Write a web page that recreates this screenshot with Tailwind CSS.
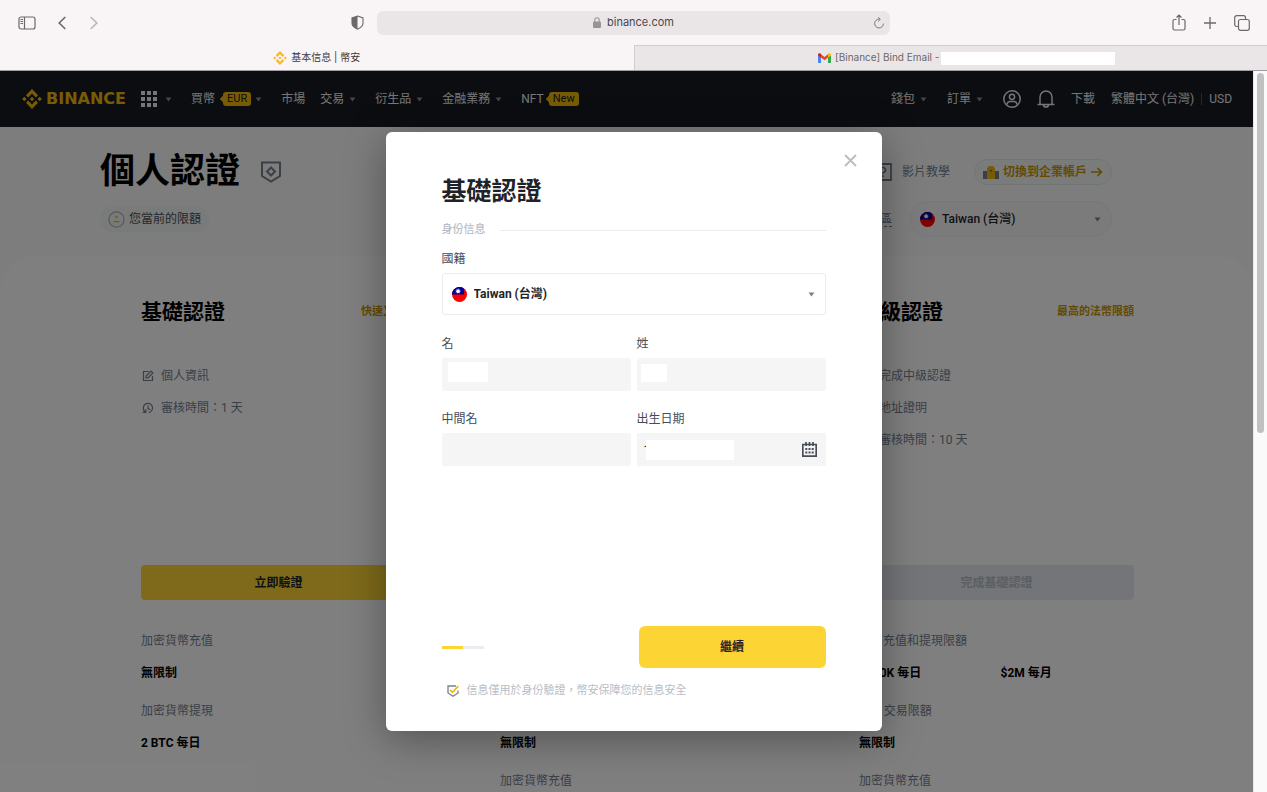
<!DOCTYPE html>
<html lang="zh-Hant">
  <head>
    <meta charset="UTF-8" />
    <meta name="viewport" content="width=device-width, initial-scale=1.0" />
    <script src="https://cdn.jsdelivr.net/npm/@tailwindcss/browser@4"></script>
    <title>基本信息 | 幣安</title>
  </head>

<body class="h-screen flex flex-col overflow-hidden bg-white text-xs font-[Roboto,'Noto_Sans_CJK_TC',sans-serif]">

  <!-- shared shapes -->
  <svg class="hidden" aria-hidden="true">
    <symbol id="bnb" viewBox="0 0 24 24">
      <path fill="currentColor" d="M7.4 10.1 12 5.5l4.6 4.6 2.7-2.7L12 .1 4.7 7.4zM.1 12l2.7-2.7L5.500 12l-2.700 2.700zM7.4 13.900 12 18.500l4.600-4.600 2.700 2.700L12 23.900l-7.300-7.300zM18.500 12l2.700-2.700L23.900 12l-2.700 2.700zM14.700 12 12 14.700 9.300 12 12 9.300z"/>
    </symbol>
    <symbol id="caret" viewBox="0 0 8 6"><path fill="currentColor" d="M.5.500h7L4 5.500z"/></symbol>
    <symbol id="flag" viewBox="0 0 16 16">
      <circle cx="8" cy="8" r="8" fill="#fe0000"/>
      <path fill="#000095" d="M0 8A8 8 0 0 1 13 1.800V8z"/>
      <circle cx="6.500" cy="4.500" r="2" fill="#fff"/>
      <circle cx="6.500" cy="4.500" r="2.600" fill="none" stroke="#8e8ee0" stroke-width=".8" stroke-dasharray="1 1"/>
    </symbol>
    <symbol id="edit" viewBox="0 0 16 16">
      <path fill="none" stroke="currentColor" stroke-width="1.600" d="M9 2H2v12h12V8M5.500 10.500V8L12 1.500 14.500 4 8 10.500z"/>
    </symbol>
    <symbol id="clock" viewBox="0 0 16 16">
      <path fill="none" stroke="currentColor" stroke-width="1.600" d="M4.500 13.200A6.200 6.200 0 1 1 9 14.100M1 13.800h4.200V9.600M8 4.500v4l2.800 1.800"/>
    </symbol>
  </svg>

  <!-- browser toolbar -->
  <div class="h-[45px] shrink-0 grid grid-cols-[1fr_513px_1fr] items-center bg-[#f9f5f7] text-[#6b686a]">
    <div class="flex items-center pl-[18px] pr-[13px]">
      <button aria-label="Sidebar">
        <svg class="w-[18px] h-[14px]" viewBox="0 0 18 14" fill="none" stroke="currentColor" stroke-width="1.2"><rect x="1" y="1" width="16" height="12" rx="2"/><path d="M6.500 1v12M2.500 3.500h2.500M2.500 5.500h2.500M2.500 7.500h2.500"/></svg>
      </button>
      <button class="ml-[22px]" aria-label="Back">
        <svg class="w-2 h-[14px]" viewBox="0 0 8 14" fill="none" stroke="currentColor" stroke-width="1.600"><path d="M7.300 1 1.200 7l6.100 6"/></svg>
      </button>
      <button class="ml-6 text-[#b9b6b8]" aria-label="Forward">
        <svg class="w-2 h-[14px]" viewBox="0 0 8 14" fill="none" stroke="currentColor" stroke-width="1.600"><path d="M.7 1l6.100 6-6.100 6"/></svg>
      </button>
      <button class="ml-auto" aria-label="Privacy report">
        <svg class="w-[13px] h-[15px]" viewBox="0 0 13 15"><path d="M6.500 1 12 3v5.500c0 2.500-2.500 4.300-5.500 5.700C3.500 12.800 1 11 1 8.500V3z" fill="none" stroke="currentColor" stroke-width="1.100"/><path d="M6.500 1v13.200C3.500 12.800 1 11 1 8.500V3z" fill="currentColor"/></svg>
      </button>
    </div>
    <div class="h-6 rounded-md bg-[#eae6e8] flex items-center justify-center relative font-[Inter,sans-serif] text-[11px] text-[#4b484a]">
      <svg class="w-2 h-[11px] mr-1.5" viewBox="0 0 8 11"><rect x="0" y="4.500" width="8" height="6.500" rx="1" fill="#979496"/><path d="M1.800 5V3a2.200 2.200 0 0 1 4.400 0v2" fill="none" stroke="#979496" stroke-width="1.100"/></svg>
      binance.com
      <button class="absolute right-[5px]" aria-label="Reload">
        <svg class="w-3 h-3" viewBox="0 0 12 12" fill="none" stroke="#7b787a" stroke-width="1"><path d="M6.500 2.200A4.400 4.400 0 1 0 10.400 6.600M5 .3l2.300 2L5.200 4.400"/></svg>
      </button>
    </div>
    <div class="flex items-center justify-end gap-[18px] pr-[17px]">
      <button aria-label="Share">
        <svg class="w-[14px] h-[17px]" viewBox="0 0 14 17" fill="none" stroke="currentColor" stroke-width="1.200"><path d="M4.500 5.500H2.500A1.500 1.500 0 0 0 1 7v7.500A1.500 1.500 0 0 0 2.500 16h9a1.500 1.500 0 0 0 1.500-1.500V7a1.500 1.500 0 0 0-1.500-1.500h-2M7 11V1M4.500 3.500 7 1l2.500 2.500"/></svg>
      </button>
      <button aria-label="New tab">
        <svg class="w-3 h-3" viewBox="0 0 12 12" fill="none" stroke="currentColor" stroke-width="1.300"><path d="M6 0v12M0 6h12"/></svg>
      </button>
      <button aria-label="Tab overview">
        <svg class="w-4 h-4" viewBox="0 0 16 16" fill="none" stroke="currentColor" stroke-width="1.200"><rect x="4.500" y="4.500" width="10.800" height="10.800" rx="2"/><path d="M4.500 11.500H2.700a2 2 0 0 1-2-2V2.700a2 2 0 0 1 2-2h6.800a2 2 0 0 1 2 2v1.800"/></svg>
      </button>
    </div>
  </div>

  <!-- browser tabs -->
  <div class="h-[26px] shrink-0 grid grid-cols-2 text-[10px] font-[Inter,'Noto_Sans_CJK_TC',sans-serif] border-b border-[#a09ea0]">
    <div class="flex items-center justify-center gap-1 bg-[#f9f5f7] text-[#3c393b]">
      <svg class="w-[14px] h-[14px] text-[#f3ba2f]"><use href="#bnb"/></svg>
      基本信息 | 幣安
    </div>
    <div class="flex items-center justify-center gap-1 pl-8 bg-[#eae6e8] text-[#6b686a] border-l border-t border-[#d0cccf]">
      <svg class="w-[13px] h-[10px]" viewBox="0 0 13 10"><path fill="#4285f4" d="M0 2v7.200c0 .5.300.8.800.8H3V4z"/><path fill="#34a853" d="M10 4v6h2.200c.5 0 .8-.3.800-.8V2z"/><path fill="#ea4335" d="M3 1.200 6.500 4 10 1.200V4.600L6.500 7.300 3 4.600z"/><path fill="#c5221f" d="M0 2C0 .2 1.700-.3 3 .8v3.800L0 2.400z"/><path fill="#fbbc04" d="M13 2c0-1.800-1.700-2.300-3-1.200v3.800l3-2.200z"/></svg>
      <span>[Binance] Bind Email -</span>
      <span class="w-[174px] h-[13px] bg-white -ml-0.5"></span>
    </div>
  </div>

  <div class="relative flex-1 min-h-0 flex">
    <div class="relative flex-1 min-w-0 overflow-hidden bg-[#fafafa]">

      <!-- navbar -->
      <nav class="h-14 bg-[#181a20] text-[#eaecef] pl-[22px] pr-[21px] flex items-center justify-between whitespace-nowrap">
        <div class="flex items-center gap-[15px]">
          <a href="#" class="flex items-center gap-1 text-[#f0b90b] font-['DejaVu_Sans',sans-serif] font-bold text-base">
            <svg class="w-5 h-5"><use href="#bnb"/></svg>BINANCE
          </a>
          <a href="#" aria-label="Products" class="flex items-center gap-2 mr-1">
            <svg class="w-4 h-4" viewBox="0 0 16 16" fill="currentColor"><path d="M0 0h4v4H0zM6 0h4v4H6zM12 0h4v4h-4zM0 6h4v4H0zM6 6h4v4H6zM12 6h4v4h-4zM0 12h4v4H0zM6 12h4v4H6zM12 12h4v4h-4z"/></svg>
            <svg class="w-[7px] h-[5px] text-[#848e9c]"><use href="#caret"/></svg>
          </a>
          <a href="#" class="flex items-center gap-1 mr-1">買幣
            <span class="relative ml-1 bg-[#f0b90b] text-[#181a20] rounded-[3px] px-1 h-[14px] leading-[14px] text-[11px] before:absolute before:-left-0.5 before:top-1 before:w-1.5 before:h-1.5 before:rotate-45 before:bg-[#f0b90b]"><span class="relative">EUR</span></span>
            <svg class="w-[7px] h-[5px] text-[#848e9c]"><use href="#caret"/></svg>
          </a>
          <a href="#">市場</a>
          <a href="#" class="flex items-center gap-[5px] mr-1">交易 <svg class="w-[7px] h-[5px] text-[#848e9c]"><use href="#caret"/></svg></a>
          <a href="#" class="flex items-center gap-[5px] mr-1">衍生品 <svg class="w-[7px] h-[5px] text-[#848e9c]"><use href="#caret"/></svg></a>
          <a href="#" class="flex items-center gap-[5px] mr-1">金融業務 <svg class="w-[7px] h-[5px] text-[#848e9c]"><use href="#caret"/></svg></a>
          <a href="#" class="flex items-center gap-[5px]">NFT
            <span class="relative bg-[#f0b90b] text-[#181a20] rounded-[3px] px-1 h-[14px] leading-[14px] text-[11px] before:absolute before:-left-0.5 before:top-1 before:w-1.5 before:h-1.5 before:rotate-45 before:bg-[#f0b90b]"><span class="relative">New</span></span>
          </a>
        </div>
        <div class="flex items-center gap-4">
          <a href="#" class="flex items-center gap-[5px] mr-1">錢包 <svg class="w-[7px] h-[5px] text-[#848e9c]"><use href="#caret"/></svg></a>
          <a href="#" class="flex items-center gap-[5px] mr-1">訂單 <svg class="w-[7px] h-[5px] text-[#848e9c]"><use href="#caret"/></svg></a>
          <a href="#" aria-label="Account">
            <svg class="w-[18px] h-[18px]" viewBox="0 0 18 18" fill="none" stroke="currentColor" stroke-width="1.500"><circle cx="9" cy="9" r="8.200"/><circle cx="9" cy="6.800" r="2.600"/><path d="M4 14.500c.3-2 1.500-3 3-3h4c1.500 0 2.700 1 3 3"/></svg>
          </a>
          <a href="#" aria-label="Notifications">
            <svg class="w-[18px] h-[18px]" viewBox="0 0 18 18" fill="none" stroke="currentColor" stroke-width="1.500"><path d="M.5 14.500h17M3 14.500V7a6 6 0 0 1 12 0v7.500M6.500 15c.5 2.800 4.500 2.800 5 0"/></svg>
          </a>
          <a href="#">下載</a>
          <div class="flex items-center gap-[7px]">
            <a href="#">繁體中文 (台灣)</a>
            <span class="w-px h-3 bg-[#474d57]"></span>
            <a href="#">USD</a>
          </div>
        </div>
      </nav>

      <!-- page heading -->
      <header class="pl-[100px] pr-[141px] pt-6 pb-[19px] flex flex-col gap-2">
        <div class="h-[42px] flex items-center justify-between">
          <h1 class="flex items-center gap-[21px] text-[35px] leading-[42px] font-bold">個人認證
            <svg class="w-5 h-[22px] text-[#76808f]" viewBox="0 0 20 22" fill="none" stroke="currentColor" stroke-width="2"><path d="M1 1.500h18V15l-9 5.500L1 15z"/><path d="M10 6.500 14 10.500 10 14.500 6 10.500z"/></svg>
          </h1>
          <div class="flex items-center">
            <a href="#" class="flex items-center gap-2.5 text-[#76808f]">
              <svg class="w-[18px] h-[18px]" viewBox="0 0 18 18" fill="none" stroke="currentColor" stroke-width="1.800"><path d="M1 1h16v16H1z"/><path d="M6.500 7a2.500 2.500 0 1 1 3.800 2.100c-.9.500-1.300.9-1.300 1.700M9 12.200v1.800"/></svg>
              影片教學
            </a>
            <a href="#" class="ml-6 h-[26px] px-2 rounded-full border border-[#e6eaea] bg-[#f5f9f8] flex items-center gap-1 font-bold text-[#c99400]">
              <svg class="w-4 h-[13px]" viewBox="0 0 16 13"><path fill="#76808f" d="M0 5h4v8H0zM12 5h4v8h-4z"/><path fill="#f0b90b" d="M4 2l2-2h4l2 2v11H4z"/><path fill="#76808f" d="M8 3.200 9.500 4.700 8 6.200 6.500 4.700z"/></svg>
              切換到企業帳戶
              <svg class="w-3 h-2.5" viewBox="0 0 12 10" fill="none" stroke="currentColor" stroke-width="1.700"><path d="M0 5h10.500M6.500 1l4 4-4 4"/></svg>
            </a>
          </div>
        </div>
        <div class="flex items-center justify-between">
          <div class="h-[26px] px-2 rounded-full bg-[#f2f6f4] flex items-center gap-1 text-[#474d57]">
            <svg class="w-[17px] h-[17px]" viewBox="0 0 17 17"><circle cx="8.500" cy="8.500" r="7.600" fill="none" stroke="#aeb4bc" stroke-width="1.300"/><path fill="#f0b90b" d="M8.500 4.500 10 6 8.500 7.500 7 6zM5.500 10h6v1.200h-6z"/></svg>
            您當前的限額
          </div>
          <div class="flex items-center gap-[18px]">
            <label for="region" class="text-[#76808f] border-b border-dashed border-[#76808f] leading-[14px]">居住國家/地區</label>
            <div class="relative flex items-center">
              <svg class="absolute left-[10px] w-[15px] h-[15px]"><use href="#flag"/></svg>
              <select id="region" class="w-[202px] h-9 pl-[31px] appearance-none rounded-full border border-[#efefef] bg-[#f6f6f6] text-[#1e2329] text-xs font-medium"><option>Taiwan (台灣)</option></select>
              <svg class="absolute right-[11px] w-[7px] h-[5px] text-[#76808f]"><use href="#caret"/></svg>
            </div>
          </div>
        </div>
      </header>

      <!-- verification levels -->
      <main class="bg-white rounded-t-[35px] pl-[141px] pr-[119px] pt-10 pb-20 grid grid-cols-3 gap-[84px] whitespace-nowrap">
        <section>
          <div class="h-8 flex items-center justify-between">
            <h2 class="text-[21px] font-bold">基礎認證</h2>
            <span class="text-[11px] font-bold text-[#c99400]">快速又簡單</span>
          </div>
          <ul class="mt-8 min-h-[205px] leading-8 text-[#76808f]">
            <li class="flex items-center gap-1.5"><svg class="w-[14px] h-3"><use href="#edit"/></svg>個人資訊</li>
            <li class="flex items-center gap-1.5"><svg class="w-[14px] h-3"><use href="#clock"/></svg>審核時間：1 天</li>
          </ul>
          <button class="w-full h-[35px] rounded bg-[#fcd535] font-bold text-[#1e2329]">立即驗證</button>
          <dl class="mt-[29px] flex flex-col gap-[14px] leading-6">
            <div><dt class="text-[#76808f]">加密貨幣充值</dt><dd class="mt-2 font-bold">無限制</dd></div>
            <div><dt class="text-[#76808f]">加密貨幣提現</dt><dd class="mt-2 font-bold">2 BTC 每日</dd></div>
          </dl>
        </section>

        <section>
          <div class="h-8 flex items-center justify-between">
            <h2 class="text-[21px] font-bold">中級認證</h2>
          </div>
          <ul class="mt-8 min-h-[205px] leading-8 text-[#76808f]">
            <li class="flex items-center gap-1.5"><svg class="w-[14px] h-3"><use href="#edit"/></svg>完成基礎認證</li>
            <li class="flex items-center gap-1.5"><svg class="w-[14px] h-3"><use href="#clock"/></svg>審核時間：10 天</li>
          </ul>
          <button class="w-full h-[35px] rounded bg-[#e6eaf0] font-bold text-[#b7bdc6]" disabled>完成基礎認證</button>
          <dl class="mt-[29px] flex flex-col gap-[14px] leading-6">
            <div><dt class="text-[#76808f]">法幣充值和提現限額</dt><dd class="mt-2 font-bold">$50K 每日</dd></div>
            <div><dt class="text-[#76808f]">P2P 交易限額</dt><dd class="mt-2 font-bold">無限制</dd></div>
            <div><dt class="text-[#76808f]">加密貨幣充值</dt></div>
          </dl>
        </section>

        <section>
          <div class="h-8 flex items-center justify-between">
            <h2 class="text-[21px] font-bold">高級認證</h2>
            <span class="text-[11px] font-bold text-[#c99400]">最高的法幣限額</span>
          </div>
          <ul class="mt-8 min-h-[205px] leading-8 text-[#76808f]">
            <li class="flex items-center gap-1.5"><svg class="w-[14px] h-3"><use href="#edit"/></svg>完成中級認證</li>
            <li class="flex items-center gap-1.5"><svg class="w-[14px] h-3"><use href="#edit"/></svg>地址證明</li>
            <li class="flex items-center gap-1.5"><svg class="w-[14px] h-3"><use href="#clock"/></svg>審核時間：10 天</li>
          </ul>
          <button class="w-full h-[35px] rounded bg-[#e6eaf0] font-bold text-[#b7bdc6]" disabled>完成基礎認證</button>
          <dl class="mt-[29px] flex flex-col gap-[14px] leading-6">
            <div><dt class="text-[#76808f]">法幣充值和提現限額</dt><dd class="mt-2 font-bold grid grid-cols-2 gap-2"><span>$200K 每日</span><span>$2M 每月</span></dd></div>
            <div><dt class="text-[#76808f]">P2P 交易限額</dt><dd class="mt-2 font-bold">無限制</dd></div>
            <div><dt class="text-[#76808f]">加密貨幣充值</dt></div>
          </dl>
        </section>
      </main>

      <!-- backdrop -->
      <div class="absolute inset-0 bg-black/50"></div>
    </div>

    <!-- scrollbar -->
    <div class="w-[14px] shrink-0 bg-[#fafafa] border-l border-[#e8e8e8] flex justify-center pt-0.5">
      <div class="w-[7px] h-1/2 rounded-full bg-[#c1c1c1]"></div>
    </div>

    <!-- modal -->
    <div class="absolute inset-0 flex items-center justify-center">
      <form role="dialog" aria-labelledby="dialog-title" class="relative w-[496px] bg-white rounded-md px-14 pt-11 pb-[30px] shadow-[0_8px_40px_rgba(0,0,0,0.35)] text-[#474d57]">
        <button type="button" aria-label="Close" class="absolute top-[22px] right-[25px]">
          <svg class="w-[13px] h-[13px]" viewBox="0 0 13 13" fill="none" stroke="#b7bdc6" stroke-width="1.800"><path d="M1 1l11 11M12 1 1 12"/></svg>
        </button>
        <h2 id="dialog-title" class="text-[25px] leading-8 font-bold text-[#1e2329]">基礎認證</h2>
        <div class="mt-[14px] flex items-center gap-[14px] text-[11px] leading-4 font-medium text-[#b7bdc6]">身份信息 <span class="flex-1 h-px bg-[#eaecef]"></span></div>

        <label for="country" class="block mt-[11px] leading-5">國籍</label>
        <div class="relative mt-1 flex items-center">
          <svg class="absolute left-[10px] w-[15px] h-[15px]"><use href="#flag"/></svg>
          <select id="country" class="w-full h-[42px] pl-[31px] appearance-none rounded-[3px] border border-[#eaecef] bg-white text-xs font-bold text-[#1e2329]"><option>Taiwan (台灣)</option></select>
          <svg class="absolute right-[11px] w-[7px] h-[5px] text-[#76808f]"><use href="#caret"/></svg>
        </div>

        <div class="mt-[19px] grid grid-cols-2 gap-x-1.5 gap-y-[18px]">
          <div>
            <label for="first" class="block leading-5">名</label>
            <div class="relative mt-1">
              <input id="first" class="block w-full h-[33px] px-2 rounded-[3px] bg-[#f5f5f5]" />
              <span class="absolute left-1.5 top-1 w-10 h-5 bg-white"></span>
            </div>
          </div>
          <div>
            <label for="last" class="block leading-5">姓</label>
            <div class="relative mt-1">
              <input id="last" class="block w-full h-[33px] px-2 rounded-[3px] bg-[#f5f5f5]" />
              <span class="absolute left-1 top-1.5 w-[26px] h-[18px] bg-white"></span>
            </div>
          </div>
          <div>
            <label for="middle" class="block leading-5">中間名</label>
            <input id="middle" class="block w-full h-[33px] mt-1 px-2 rounded-[3px] bg-[#f5f5f5]" />
          </div>
          <div>
            <label for="birth" class="block leading-5">出生日期</label>
            <div class="relative mt-1 flex items-center">
              <input id="birth" value="1" class="block w-full h-[33px] px-[7px] bg-[#f5f5f5] text-[#1e2329]" />
              <span class="absolute left-[9px] w-[88px] h-5 bg-white"></span>
              <svg class="absolute right-[9px] w-[15px] h-[15px]" viewBox="0 0 15 15"><path fill="none" stroke="currentColor" stroke-width="1.700" d="M.8 2.500h13.400v11.700H.8zM4 0v4M11 0v4M7.500 0v4"/><path fill="currentColor" d="M3.300 6h2v2h-2zM6.500 6h2v2h-2zM9.700 6h2v2h-2zM3.300 9.500h2v2h-2zM6.500 9.500h2v2h-2zM9.700 9.500h2v2h-2z"/></svg>
            </div>
          </div>
        </div>

        <div class="mt-40 flex items-center justify-between">
          <div class="flex w-[42px] h-[3px] bg-[#eaecef]"><span class="w-1/2 bg-[#fcd535]"></span></div>
          <button type="submit" class="w-[187px] h-[42px] rounded-md bg-[#fcd535] font-bold text-[#1e2329]">繼續</button>
        </div>
        <p class="mt-[13px] pl-[5px] flex items-center gap-2 text-[11px] leading-5 text-[#b7bdc6]">
          <svg class="w-3 h-3" viewBox="0 0 12 12" fill="none" stroke-width="1.300"><path stroke="#76808f" d="M9 1H1v7l5 3.200L11 8V5.500"/><path stroke="#f0b90b" stroke-width="1.700" d="M3 4.800 5.500 7.300 11.300 1.200"/></svg>
          信息僅用於身份驗證，幣安保障您的信息安全
        </p>
      </form>
    </div>
  </div>
</body>
</html>
